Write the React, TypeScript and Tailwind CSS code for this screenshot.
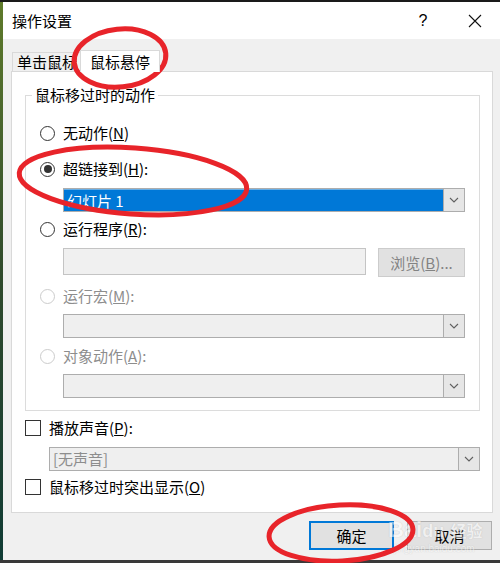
import React from "react";

const Chevron = ({ color = "#606060" }: { color?: string }) => (
  <svg width="10" height="6" viewBox="0 0 10 6">
    <polyline points="1,1 5,5 9,1" fill="none" stroke={color} strokeWidth="1.1" />
  </svg>
);

function Select({
  children,
  className = "",
  blue = false,
}: {
  children?: React.ReactNode;
  className?: string;
  blue?: boolean;
}) {
  return (
    <div className={`flex h-[24px] border border-[#adadad] ${className}`}>
      <div
        className={`flex-1 flex items-center pl-[3px] ${
          blue ? "bg-[#0078d7] text-white border-t border-white/40" : "bg-[#efefef] text-[#8d8d8d]"
        }`}
      >
        {children}
      </div>
      <div className="w-[21px] flex items-center justify-center bg-[#e6e6e6] border-l border-[#adadad]">
        <Chevron />
      </div>
    </div>
  );
}

function Radio({ checked = false, disabled = false }: { checked?: boolean; disabled?: boolean }) {
  return (
    <span
      className={`w-[15px] h-[15px] shrink-0 rounded-full border bg-white flex items-center justify-center ${
        disabled ? "border-[#cccccc]" : "border-[#333333]"
      }`}
    >
      {checked && <span className="w-[8px] h-[8px] rounded-full bg-[#333333]" />}
    </span>
  );
}

function RadioRow({
  label,
  checked,
  disabled,
  className = "",
}: {
  label: React.ReactNode;
  checked?: boolean;
  disabled?: boolean;
  className?: string;
}) {
  return (
    <div className={`flex items-center h-[20px] gap-[8px] ${className}`}>
      <Radio checked={checked} disabled={disabled} />
      <span className={disabled ? "text-[#8d8d8d]" : "text-black"}>{label}</span>
    </div>
  );
}

function CheckRow({ label, className = "" }: { label: React.ReactNode; className?: string }) {
  return (
    <div className={`flex items-center h-[20px] gap-[8px] ${className}`}>
      <span className="w-[16px] h-[16px] border border-[#333333] bg-white shrink-0" />
      <span className="text-black">{label}</span>
    </div>
  );
}

export default function App() {
  return (
    <div className="relative w-[500px] h-[563px] overflow-hidden bg-[#1b1b1b] font-['Microsoft_YaHei','Noto_Sans_CJK_SC','Noto_Sans',sans-serif] text-[15px] leading-[20px]">
      <div className="flex flex-col h-full">
        <div className="h-[2px] bg-[#1a1a1a]" />
        <div className="flex flex-1">
          <div className="w-[3px] bg-gradient-to-b from-[#5f7b2a] via-[#2f4a2c] to-[#0f3b34]" />
          <div className="flex-1 flex flex-col">
            {/* title bar */}
            <div className="h-[37px] bg-white flex items-center pl-[9px]">
              <span className="text-black text-[15px]">操作设置</span>
              <span className="ml-auto w-[30px] text-center text-[16px] text-black font-['Liberation_Sans',sans-serif]">?</span>
              <span className="ml-[27px] mr-[15px] w-[20px] flex items-center justify-center">
                <svg width="14" height="14" viewBox="0 0 14 14">
                  <path d="M1 1 L13 13 M13 1 L1 13" stroke="#111" strokeWidth="1.1" fill="none" />
                </svg>
              </span>
            </div>
            {/* body */}
            <div className="flex-1 bg-[#f0f0f0] flex flex-col pl-[8px] pr-[7px] pt-[11px]">
              {/* tabs */}
              <div className="flex items-end h-[21px]">
                <div className="h-[19px] w-[70px] ml-[1px] border border-b-0 border-[#d9d9d9] bg-[#f0f0f0] flex items-center justify-center text-black">
                  单击鼠标
                </div>
                <div className="h-[22px] w-[80px] -ml-[2px] border border-b-0 border-[#d9d9d9] bg-white flex items-center justify-center text-black relative z-10 -mb-[1px]">
                  鼠标悬停
                </div>
              </div>
              {/* panel */}
              <div className="h-[442px] bg-white border border-[#d9d9d9] pl-[13px] pr-[12px] flex flex-col">
                <fieldset className="mt-[13px] border border-[#dcdcdc]">
                  <legend className="ml-[6px] px-[3px] text-black leading-[20px]">鼠标移过时的动作</legend>
                  <div className="pl-[14px] pr-[14px] pb-[12px] flex flex-col">
                    <RadioRow className="mt-[18px]" label={<>无动作(<u>N</u>)</>} />
                    <RadioRow className="mt-[16px]" checked label={<>超链接到(<u>H</u>):</>} />
                    <Select blue className="mt-[9px] ml-[23px]">
                      <span>幻灯片 1</span>
                    </Select>
                    <RadioRow className="mt-[7px]" label={<>运行程序(<u>R</u>):</>} />
                    <div className="mt-[9px] ml-[23px] flex items-start">
                      <div className="w-[303px] h-[27px] border border-[#c4c4c4] bg-[#f0f0f0]" />
                      <div className="ml-[12px] flex-1 h-[29px] border border-[#cccccc] bg-[#e1e1e1] flex items-center justify-center text-[#838383]">
                        浏览(<u>B</u>)...
                      </div>
                    </div>
                    <RadioRow className="mt-[9px]" disabled label={<>运行宏(<u>M</u>):</>} />
                    <Select className="mt-[8px] ml-[23px]" />
                    <RadioRow className="mt-[8px]" disabled label={<>对象动作(<u>A</u>):</>} />
                    <Select className="mt-[8px] ml-[23px]" />
                  </div>
                </fieldset>
                <CheckRow className="mt-[7px]" label={<>播放声音(<u>P</u>):</>} />
                <Select className="mt-[9px] ml-[24px]">
                  <span className="text-[#8d8d8d]">[无声音]</span>
                </Select>
                <CheckRow className="mt-[6px]" label={<>鼠标移过时突出显示(<u>O</u>)</>} />
              </div>
              {/* buttons */}
              <div className="flex justify-end gap-[13px] mt-[8px] pr-[1px]">
                <div className="w-[85px] h-[29px] border-2 border-[#0078d7] bg-[#e1e1e1] flex items-center justify-center text-black">
                  确定
                </div>
                <div className="w-[85px] h-[29px] border border-[#adadad] bg-[#e1e1e1] flex items-center justify-center text-black">
                  取消
                </div>
              </div>
            </div>
          </div>
        </div>
        <div className="h-[3px] bg-[#3a3a3a]" />
      </div>

      {/* watermark */}
      <div className="absolute left-[388px] top-[518px] flex flex-col items-start pointer-events-none opacity-50">
        <span className="text-[22px] leading-[24px] font-bold text-white font-['Liberation_Sans',sans-serif] [text-shadow:0_0_1px_#999]">
          Bai<span className="text-[18px]">du</span> <span className="font-['Noto_Sans_CJK_SC',sans-serif] text-[16px]">经验</span>
        </span>
        <span className="text-[10px] leading-[12px] text-white font-['Liberation_Sans',sans-serif] [text-shadow:0_0_1px_#999] ml-[6px]">
          jingyan.baidu.com
        </span>
      </div>

      {/* annotations */}
      <svg className="absolute inset-0 pointer-events-none" width="500" height="563" viewBox="0 0 500 563">
        <ellipse cx="120" cy="58" rx="46" ry="29" fill="none" stroke="#e8242a" strokeWidth="5" transform="rotate(-6 120 58)" />
        <ellipse cx="133" cy="181" rx="114" ry="33" fill="none" stroke="#e8242a" strokeWidth="5" transform="rotate(4 133 181)" />
        <ellipse cx="341" cy="533" rx="72" ry="28" fill="none" stroke="#e8242a" strokeWidth="5" transform="rotate(-3 341 533)" />
      </svg>
    </div>
  );
}
